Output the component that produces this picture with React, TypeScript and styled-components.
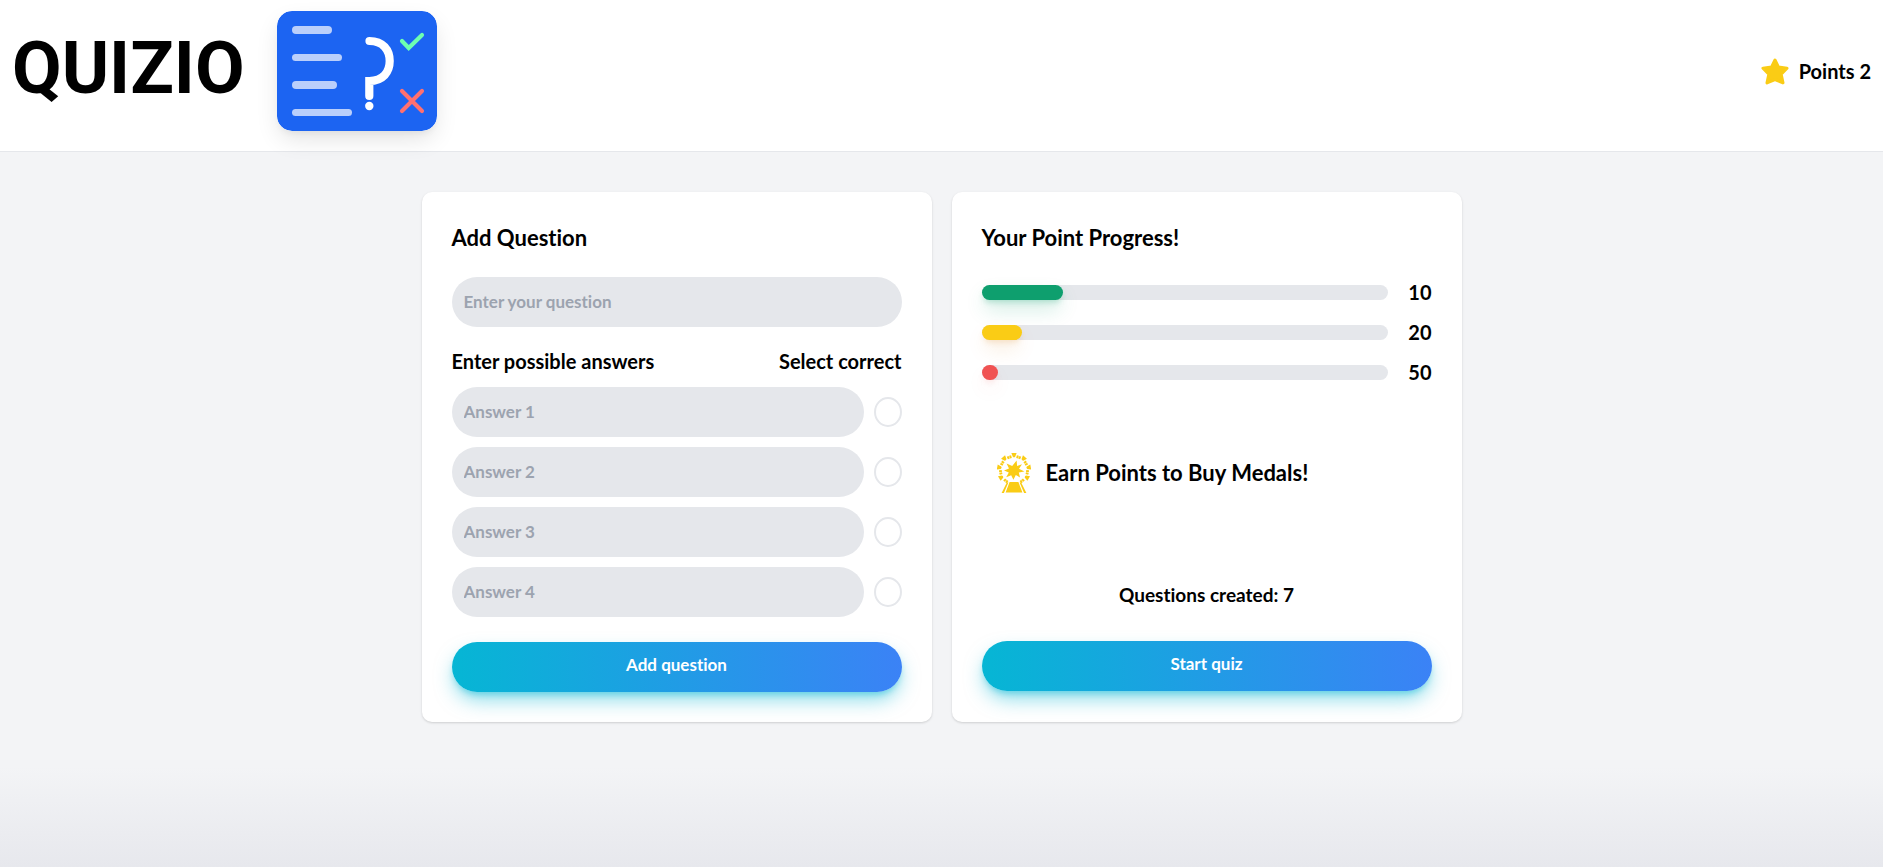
import React from "react";
import styled, { createGlobalStyle } from "styled-components";

const GlobalStyle = createGlobalStyle`
  *, *::before, *::after { box-sizing: border-box; }
  body {
    margin: 0;
    color: #000;
    background: #f3f4f6;
    font-family: Lato, "Open Sans", sans-serif;
    font-size: 17px;
    font-weight: 700;
    font-variant-ligatures: none;
    line-height: 24px;
  }
  h1, h2, p { margin: 0; }
`;

const Page = styled.div`
  min-height: 100vh;
  background: linear-gradient(to top, #e7e8ed, #f3f4f6 100px);
`;

const Header = styled.header`
  display: flex;
  align-items: flex-start;
  justify-content: space-between;
  padding: 11px 12px 20px;
  background: #fff;
  border-bottom: 1px solid #e5e7eb;
`;

const Brand = styled.div`
  display: flex;
  align-items: center;
  gap: 32px;
`;

const BrandName = styled.h1`
  font-family: Roboto, sans-serif;
  font-size: 72px;
  font-weight: 700;
  line-height: 72px;
  padding-bottom: 4px;
`;

const Logo = styled.svg`
  display: block;
  width: 160px;
  height: 120px;
  border-radius: 15px;
  box-shadow: 0 10px 25px -3px rgba(0, 0, 0, 0.12), 0 4px 6px -2px rgba(0, 0, 0, 0.05);
`;

const Points = styled.div`
  display: flex;
  align-items: center;
  gap: 10px;
  height: 120px;
  font-size: 20px;
`;

const Main = styled.main`
  display: grid;
  grid-template-columns: repeat(2, minmax(0, 1fr));
  gap: 20px;
  max-width: 1040px;
  margin: 0 auto;
  padding: 40px 0;
`;

const Card = styled.section`
  display: flex;
  flex-direction: column;
  padding: 30px;
  background: #fff;
  border-radius: 10px;
  box-shadow: 0 1px 3px rgba(0, 0, 0, 0.1), 0 1px 2px rgba(0, 0, 0, 0.06);
`;

const CardTitle = styled.h2`
  font-size: 22px;
  font-weight: 700;
  line-height: 32px;
  margin-bottom: 23px;
`;

const Form = styled.form`
  display: flex;
  flex-direction: column;
`;

const TextInput = styled.input`
  flex: 1;
  min-width: 0;
  height: 50px;
  padding: 0 12px 2px;
  border: 0;
  border-radius: 25px;
  background: #e5e7eb;
  color: #000;
  font: inherit;
  &::placeholder { color: #9ca3af; opacity: 1; }
`;

const QuestionRow = styled.div`
  display: flex;
`;

const AnswersHead = styled.div`
  display: flex;
  justify-content: space-between;
  padding: 22px 0 14px;
  font-size: 20px;
`;

const AnswerList = styled.div`
  display: flex;
  flex-direction: column;
  gap: 10px;
  margin-bottom: 25px;
`;

const AnswerRow = styled.div`
  display: flex;
  align-items: center;
  gap: 10px;
`;

const Radio = styled.input`
  appearance: none;
  width: 28px;
  height: 30px;
  margin: 0;
  border: 2px solid #e5e7eb;
  border-radius: 50%;
  background: #fff;
  &:checked { background: #0e9f6e; }
`;

const PillButton = styled.button`
  height: 50px;
  padding: 0 20px 4px;
  border: 0;
  border-radius: 25px;
  color: #fff;
  font: inherit;
  cursor: pointer;
  background: linear-gradient(to right, #06b6d4, #3b82f6);
  box-shadow: 0 10px 20px -3px rgba(6, 182, 212, 0.5), 0 4px 6px -2px rgba(6, 182, 212, 0.4);
`;

const BarList = styled.div`
  display: flex;
  flex-direction: column;
  gap: 16px;
  padding-top: 3px;
`;

const BarRow = styled.div`
  display: flex;
  align-items: center;
  gap: 20px;
  font-size: 20px;
`;

const Track = styled.div`
  flex: 1;
  height: 15px;
  border-radius: 8px;
  background: #e5e7eb;
`;

const Fill = styled.div<{ $color: string; $glow: string }>`
  height: 100%;
  border-radius: 8px;
  background: ${(p) => p.$color};
  box-shadow: 0 10px 20px -3px ${(p) => p.$glow}, 0 4px 6px -2px ${(p) => p.$glow};
`;

const Medals = styled.div`
  display: flex;
  align-items: center;
  gap: 15px;
  padding: 69px 15px 0;
  font-size: 22px;
`;

const Created = styled.p`
  margin-top: auto;
  margin-bottom: 34px;
  text-align: center;
  font-size: 19px;
`;

const StartButton = styled(PillButton)`
  margin-bottom: 1px;
`;

const QuizLogo = () => (
  <Logo viewBox="0 0 160 120" role="img" aria-label="Quiz card">
    <rect width="160" height="120" rx="15" fill="#1c64f2" />
    <g fill="#bacffb">
      <rect x="15" y="15" width="40" height="8" rx="4" />
      <rect x="15" y="43" width="50" height="7" rx="3.5" />
      <rect x="15" y="70" width="45" height="8" rx="4" />
      <rect x="15" y="98" width="60" height="7" rx="3.5" />
    </g>
    <g fill="none" strokeLinecap="round">
      <path d="M92.5 30C106 30 112.7 39 112.7 50S106 70 92.3 70V85" stroke="#fff" strokeWidth="8.2" />
      <path d="M125 30L131.7 37L145 24" stroke="#6dffb0" strokeWidth="4.2" />
      <path d="M125 80L145 100M145 80L125 100" stroke="#ff7070" strokeWidth="4.2" />
    </g>
    <circle cx="92.3" cy="95" r="4.2" fill="#fff" />
  </Logo>
);

const StarIcon = () => (
  <svg width="28" height="27" viewBox="0 0 28 27" aria-hidden="true">
    <path
      d="M14 2L17.4 9L26 10.2L20.2 16.2L22 24.9L14 21.6L6 24.9L7.8 16.2L2 10.2L10.6 9Z"
      fill="#facc15" stroke="#facc15" strokeWidth="3" strokeLinejoin="round"
    />
  </svg>
);

const MedalIcon = () => (
  <svg width="34" height="40" viewBox="0 0 34 40" fill="#facc15" aria-hidden="true">
    {[0, 40, 80, 120, -40, -80, -120].map((a) => (
      <path key={a} d="M14.4 0H19.6L18.2 3.8L17 4.4L15.8 3.8Z" transform={`rotate(${a} 17 17)`} />
    ))}
    {[15, 25, 55, 65, 95, 105, 138, 148, -15, -25, -55, -65, -95, -105, -138, -148].map((a) => (
      <rect key={a} x="16" y="2" width="2" height="2.8" transform={`rotate(${a} 17 17)`} />
    ))}
    <path d="M19.6 7.4L20.1 12.9L25 11.2L22 15.8L27.4 18.6L21.8 19.4L23 24.6L18.8 22L16.4 26.8L14.2 22.2L9.2 24.2L11.8 19.4L7 17.6L12 15.6L9.6 10.6L15.2 12.9Z" />
    <path d="M12.6 29H21.4L25.4 39.6H8.6ZM9.8 29.4H11.4L6.9 40H4.6ZM22.6 29.4H24.2L29.4 40H27.1Z" />
  </svg>
);

const levels = [
  { goal: 10, percent: 20, color: "#0e9f6e", glow: "rgba(14, 159, 110, 0.3)" },
  { goal: 20, percent: 10, color: "#facc15", glow: "rgba(217, 119, 6, 0.2)" },
  { goal: 50, percent: 4, color: "#f05252", glow: "rgba(240, 82, 82, 0.15)" },
];

export default function App() {
  return (
    <Page>
      <GlobalStyle />
      <Header>
        <Brand>
          <BrandName>QUIZIO</BrandName>
          <QuizLogo />
        </Brand>
        <Points>
          <StarIcon />
          <span>Points 2</span>
        </Points>
      </Header>
      <Main>
        <Card>
          <CardTitle>Add Question</CardTitle>
          <Form onSubmit={(e) => e.preventDefault()}>
            <QuestionRow>
              <TextInput type="text" aria-label="Question" placeholder="Enter your question" />
            </QuestionRow>
            <AnswersHead>
              <span>Enter possible answers</span>
              <span>Select correct</span>
            </AnswersHead>
            <AnswerList>
              {[1, 2, 3, 4].map((n) => (
                <AnswerRow key={n}>
                  <TextInput type="text" aria-label={`Answer ${n}`} placeholder={`Answer ${n}`} />
                  <Radio type="radio" name="correct" aria-label={`Answer ${n} is correct`} />
                </AnswerRow>
              ))}
            </AnswerList>
            <PillButton type="submit">Add question</PillButton>
          </Form>
        </Card>
        <Card>
          <CardTitle>Your Point Progress!</CardTitle>
          <BarList>
            {levels.map((l) => (
              <BarRow key={l.goal}>
                <Track>
                  <Fill $color={l.color} $glow={l.glow} style={{ width: `${l.percent}%` }} />
                </Track>
                <span>{l.goal}</span>
              </BarRow>
            ))}
          </BarList>
          <Medals>
            <MedalIcon />
            <span>Earn Points to Buy Medals!</span>
          </Medals>
          <Created>Questions created: 7</Created>
          <StartButton type="button">Start quiz</StartButton>
        </Card>
      </Main>
    </Page>
  );
}
